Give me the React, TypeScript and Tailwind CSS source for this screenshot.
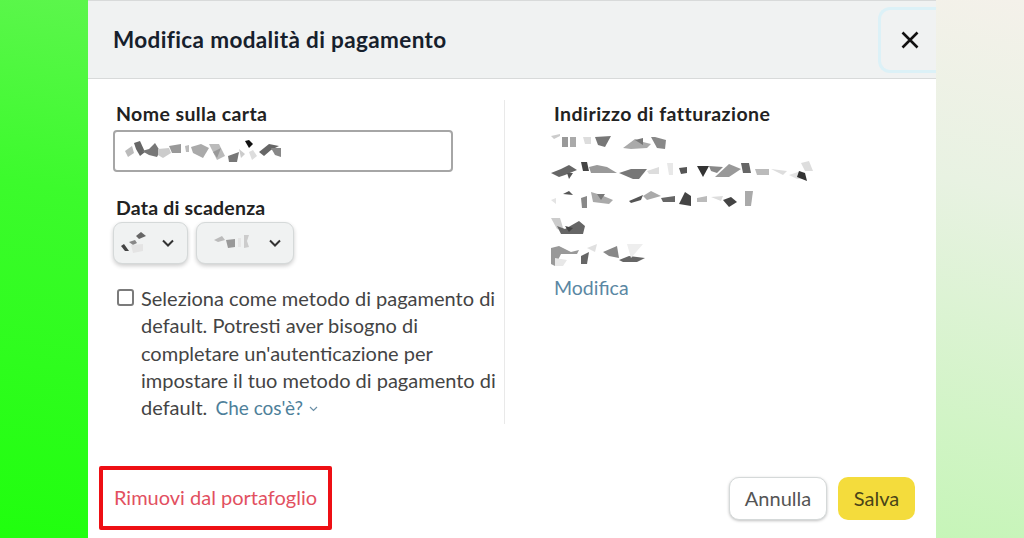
const font = "font-['Lato','Open_Sans',sans-serif]"

type Shard = [string, string]

// censored text in the screenshot, drawn as little gray shards
function Blur({ w, h, shards }: { w: number; h: number; shards: Shard[] }) {
  return (
    <svg width={w} height={h} viewBox={`0 0 ${w} ${h}`} className="block blur-[0.7px]">
      {shards.map(([pts, fill], i) => (
        <polygon key={i} points={pts} fill={fill} />
      ))}
    </svg>
  )
}

function Chevron() {
  return (
    <svg width="12" height="8" viewBox="0 0 12 8" fill="none" stroke="#333" strokeWidth="2">
      <path d="M1 1.5l5 5 5-5" />
    </svg>
  )
}

const nameShards: Shard[] = [
  ["0,11 7,6 9,13 3,17", "#bbb"],
  ["9,3 15,1 20,12 15,16 11,9", "#666"],
  ["17,11 24,9 30,3 35,11 32,17 24,15", "#777"],
  ["33,9 44,8 46,13 38,18 33,15", "#ccc"],
  ["44,6 56,4 56,13 47,13", "#999"],
  ["60,6 64,5 64,12 61,12", "#bbb"],
  ["66,7 76,4 84,8 78,18 68,13", "#aaa"],
  ["84,4 94,4 100,16 92,20 88,12", "#bbb"],
  ["88,12 96,8 92,18", "#999"],
  ["103,16 114,12 112,22 104,22", "#777"],
  ["114,9 120,14 116,18", "#ccc"],
  ["120,1 124,0 128,4 124,8", "#111"],
  ["124,12 128,10 132,16 127,20", "#ddd"],
  ["134,12 144,4 154,6 146,10 139,16", "#666"],
  ["146,8 156,8 156,17 150,15", "#888"],
]

const monthShards: Shard[] = [
  ["0,14 3,12 8,19 4,19", "#444"],
  ["8,10 14,8 16,11 12,13", "#888"],
  ["15,4 20,0 25,4 18,7", "#666"],
  ["10,13 22,12 22,19 12,21", "#e4e4e4"],
]

const yearShards: Shard[] = [
  ["0,6 8,2 11,6 4,8", "#bbb"],
  ["12,6 21,5 21,13 14,14", "#999"],
  ["24,4 27,4 27,13 24,13", "#e6e6e6"],
  ["30,1 35,1 33,7 35,13 30,14", "#ccc"],
]

const addrLine1: Shard[] = [
  ["0,2 9,0 9,2 3,5", "#ccc"],
  ["11,3 17,3 17,13 11,13", "#999"],
  ["19,3 25,3 25,13 19,13", "#aaa"],
  ["32,3 40,3 40,10 34,10", "#ddd"],
  ["44,3 60,2 54,13 47,11", "#777"],
  ["72,14 84,5 92,8 100,10 96,14 80,15", "#aaa"],
  ["84,6 92,4 92,11", "#777"],
  ["100,3 104,3 115,6 114,15 106,14", "#888"],
]
const addrLine2: Shard[] = [
  ["0,12 10,8 18,4 26,9 14,14 8,16", "#666"],
  ["16,12 22,12 18,18", "#555"],
  ["30,1 36,1 38,10 32,10", "#444"],
  ["38,6 46,4 56,6 66,12 40,12", "#999"],
  ["68,12 80,8 96,8 88,18 82,18", "#777"],
  ["96,10 108,6 108,13 98,13", "#ddd"],
  ["116,2 122,2 122,14 118,14", "#e8e8e8"],
  ["128,7 136,6 136,12 130,13", "#555"],
  ["146,5 158,5 152,16", "#333"],
  ["158,5 172,6 166,12 160,10", "#888"],
  ["164,16 178,3 190,8 178,16", "#999"],
  ["190,2 198,2 200,12 192,12", "#666"],
  ["204,8 218,8 218,14 206,14", "#bbb"],
  ["220,8 236,10 232,14", "#ddd"],
  ["238,14 250,10 252,18 246,18", "#e4e4e4"],
  ["248,10 254,12 256,20 246,16", "#333"],
  ["250,2 258,0 262,10 254,10", "#ddd"],
]
const addrLine3: Shard[] = [
  ["0,10 5,8 5,14", "#e4e4e4"],
  ["12,4 18,1 22,5", "#555"],
  ["30,8 36,6 36,18 31,18", "#888"],
  ["40,2 50,5 62,10 58,14 42,12", "#aaa"],
  ["46,4 54,4 50,10", "#777"],
  ["78,11 92,5 90,10 80,13", "#555"],
  ["92,6 100,1 110,6 96,10", "#aaa"],
  ["110,8 124,6 124,12 112,12", "#666"],
  ["128,14 134,2 140,6 140,16", "#444"],
  ["146,8 156,6 156,12 146,12", "#bbb"],
  ["160,7 172,6 170,11", "#ddd"],
  ["172,10 180,7 186,12 178,17", "#444"],
  ["194,1 202,1 200,16 194,16", "#aaa"],
]
const addrLine4: Shard[] = [
  ["0,1 9,1 13,14 6,12", "#ccc"],
  ["6,9 14,12 28,4 34,9 32,17 10,17", "#666"],
  ["14,9 22,11 18,15", "#444"],
]
const addrLine5: Shard[] = [
  ["0,4 8,2 20,8 28,6 26,10 10,10 4,22 0,20", "#999"],
  ["4,14 16,16 12,22 4,22", "#e8e8e8"],
  ["30,12 38,8 36,20 30,20", "#666"],
  ["36,4 46,0 44,8", "#e0e0e0"],
  ["52,8 66,2 68,14 58,12", "#888"],
  ["68,16 78,12 94,14 86,18 72,18", "#666"],
  ["76,0 92,0 80,14", "#eee"],
]

export default function App() {
  return (
    <div className={`${font} flex h-[538px] w-[1024px] overflow-hidden`}>
      <div className="w-[88px] shrink-0 bg-[linear-gradient(190deg,#5cf64c_0%,#3cfb2c_35%,#20ff0e_100%)]" />

      <div className="flex h-full w-[848px] shrink-0 flex-col bg-white text-[#0f1111]">
        {/* header */}
        <div className="flex h-[79px] shrink-0 items-center justify-between border-y border-[#d8dada] bg-[#f0f2f2] pl-[25px]">
          <h1 className="text-[22.5px] font-bold tracking-[0.37px] text-[#16202c]">Modifica modalità di pagamento</h1>
          <div className="flex h-[66px] w-[58px] items-center justify-center rounded-l-[12px] border-y-[3px] border-l-[3px] border-[#dcf1f7] pl-[2px]">
            <svg width="18" height="18" viewBox="0 0 18 18" stroke="#111" strokeWidth="2.6">
              <path d="M1.5 1.5l15 15M16.5 1.5l-15 15" />
            </svg>
          </div>
        </div>

        {/* form body */}
        <div className="flex pt-[21px]">
          <div className="h-[324px] w-[417px] shrink-0 border-r border-[#e9e9e9] pl-[25px]">
            <div className="pl-[3px] text-[19.5px] font-bold leading-[28px] tracking-[0.4px] text-[#222]">Nome sulla carta</div>
            <div className="mt-[2px] flex h-[42px] w-[340px] items-center rounded-[4px] border-2 border-[#a6a6a6] pl-[10px]">
              <Blur w={160} h={22} shards={nameShards} />
            </div>
            <div className="mt-[22px] pl-[3px] text-[19.5px] font-bold leading-[28px] tracking-[0.2px] text-[#222]">Data di scadenza</div>
            <div className="flex gap-[8px]">
              <div className="flex h-[42px] w-[75px] items-center justify-between rounded-[9px] border border-[#d5d9d9] bg-[#f0f2f2] pl-[7px] pr-[13px] shadow-[0_2px_4px_rgba(0,0,0,0.2)]">
                <Blur w={26} h={22} shards={monthShards} />
                <Chevron />
              </div>
              <div className="flex h-[42px] w-[98px] items-center justify-between rounded-[9px] border border-[#d5d9d9] bg-[#f0f2f2] pl-[17px] pr-[12px] shadow-[0_2px_4px_rgba(0,0,0,0.2)]">
                <Blur w={38} h={18} shards={yearShards} />
                <Chevron />
              </div>
            </div>
            <div className="mt-[21px] flex gap-[7px] pl-[4px]">
              <div className="mt-[4px] h-[17px] w-[17px] shrink-0 rounded-[3px] border-2 border-[#7b7b7b] bg-white" />
              <p className="whitespace-nowrap text-[20px] leading-[27.3px] text-[#444]">
                Seleziona come metodo di pagamento di
                <br />
                default. Potresti aver bisogno di
                <br />
                completare un'autenticazione per
                <br />
                impostare il tuo metodo di pagamento di
                <br />
                default. <span className="ml-[3px] text-[19px] text-[#4e7f9a]">Che cos'è?</span>
                <svg width="9" height="6" viewBox="0 0 9 6" fill="none" stroke="#6a8fa6" strokeWidth="1.2" className="ml-[6px] inline-block align-[3px]">
                  <path d="M1 1l3.5 3.5L8 1" />
                </svg>
              </p>
            </div>
          </div>

          <div className="pl-[49px]">
            <div className="text-[19.5px] font-bold leading-[28px] tracking-[0.45px] text-[#222]">Indirizzo di fatturazione</div>
            <div className="ml-[-3px] mt-[6px] flex flex-col gap-[9px]">
              <Blur w={116} h={18} shards={addrLine1} />
              <Blur w={262} h={20} shards={addrLine2} />
              <Blur w={204} h={18} shards={addrLine3} />
              <Blur w={36} h={18} shards={addrLine4} />
              <Blur w={96} h={22} shards={addrLine5} />
            </div>
            <div className="mt-[8px] text-[19.5px] leading-[28px] text-[#5b87a3]">Modifica</div>
          </div>
        </div>

        {/* footer */}
        <div className="mt-[42px] flex items-start justify-between pl-[11px] pr-[21px]">
          <div className="flex h-[64px] w-[233px] items-center justify-center rounded-[2px] border-[4px] border-[#ee0f14] pb-[2px] text-[20px] text-[#e2505f]">
            Rimuovi dal portafoglio
          </div>
          <div className="mt-[11px] flex gap-[11px]">
            <div className="flex h-[43px] w-[98px] items-center justify-center rounded-[10px] border border-[#d5d9d9] bg-white pb-[2px] text-[20px] text-[#555] shadow-[0_1px_3px_rgba(0,0,0,0.25)]">Annulla</div>
            <div className="flex h-[43px] w-[77px] items-center justify-center rounded-[10px] bg-[#f4dc3c] pb-[2px] text-[20px] text-[#4a4418]">Salva</div>
          </div>
        </div>
      </div>

      <div className="flex-1 bg-[linear-gradient(192deg,#f4f1ea_0%,#e8f2e2_35%,#c6f5b8_100%)]" />
    </div>
  )
}
